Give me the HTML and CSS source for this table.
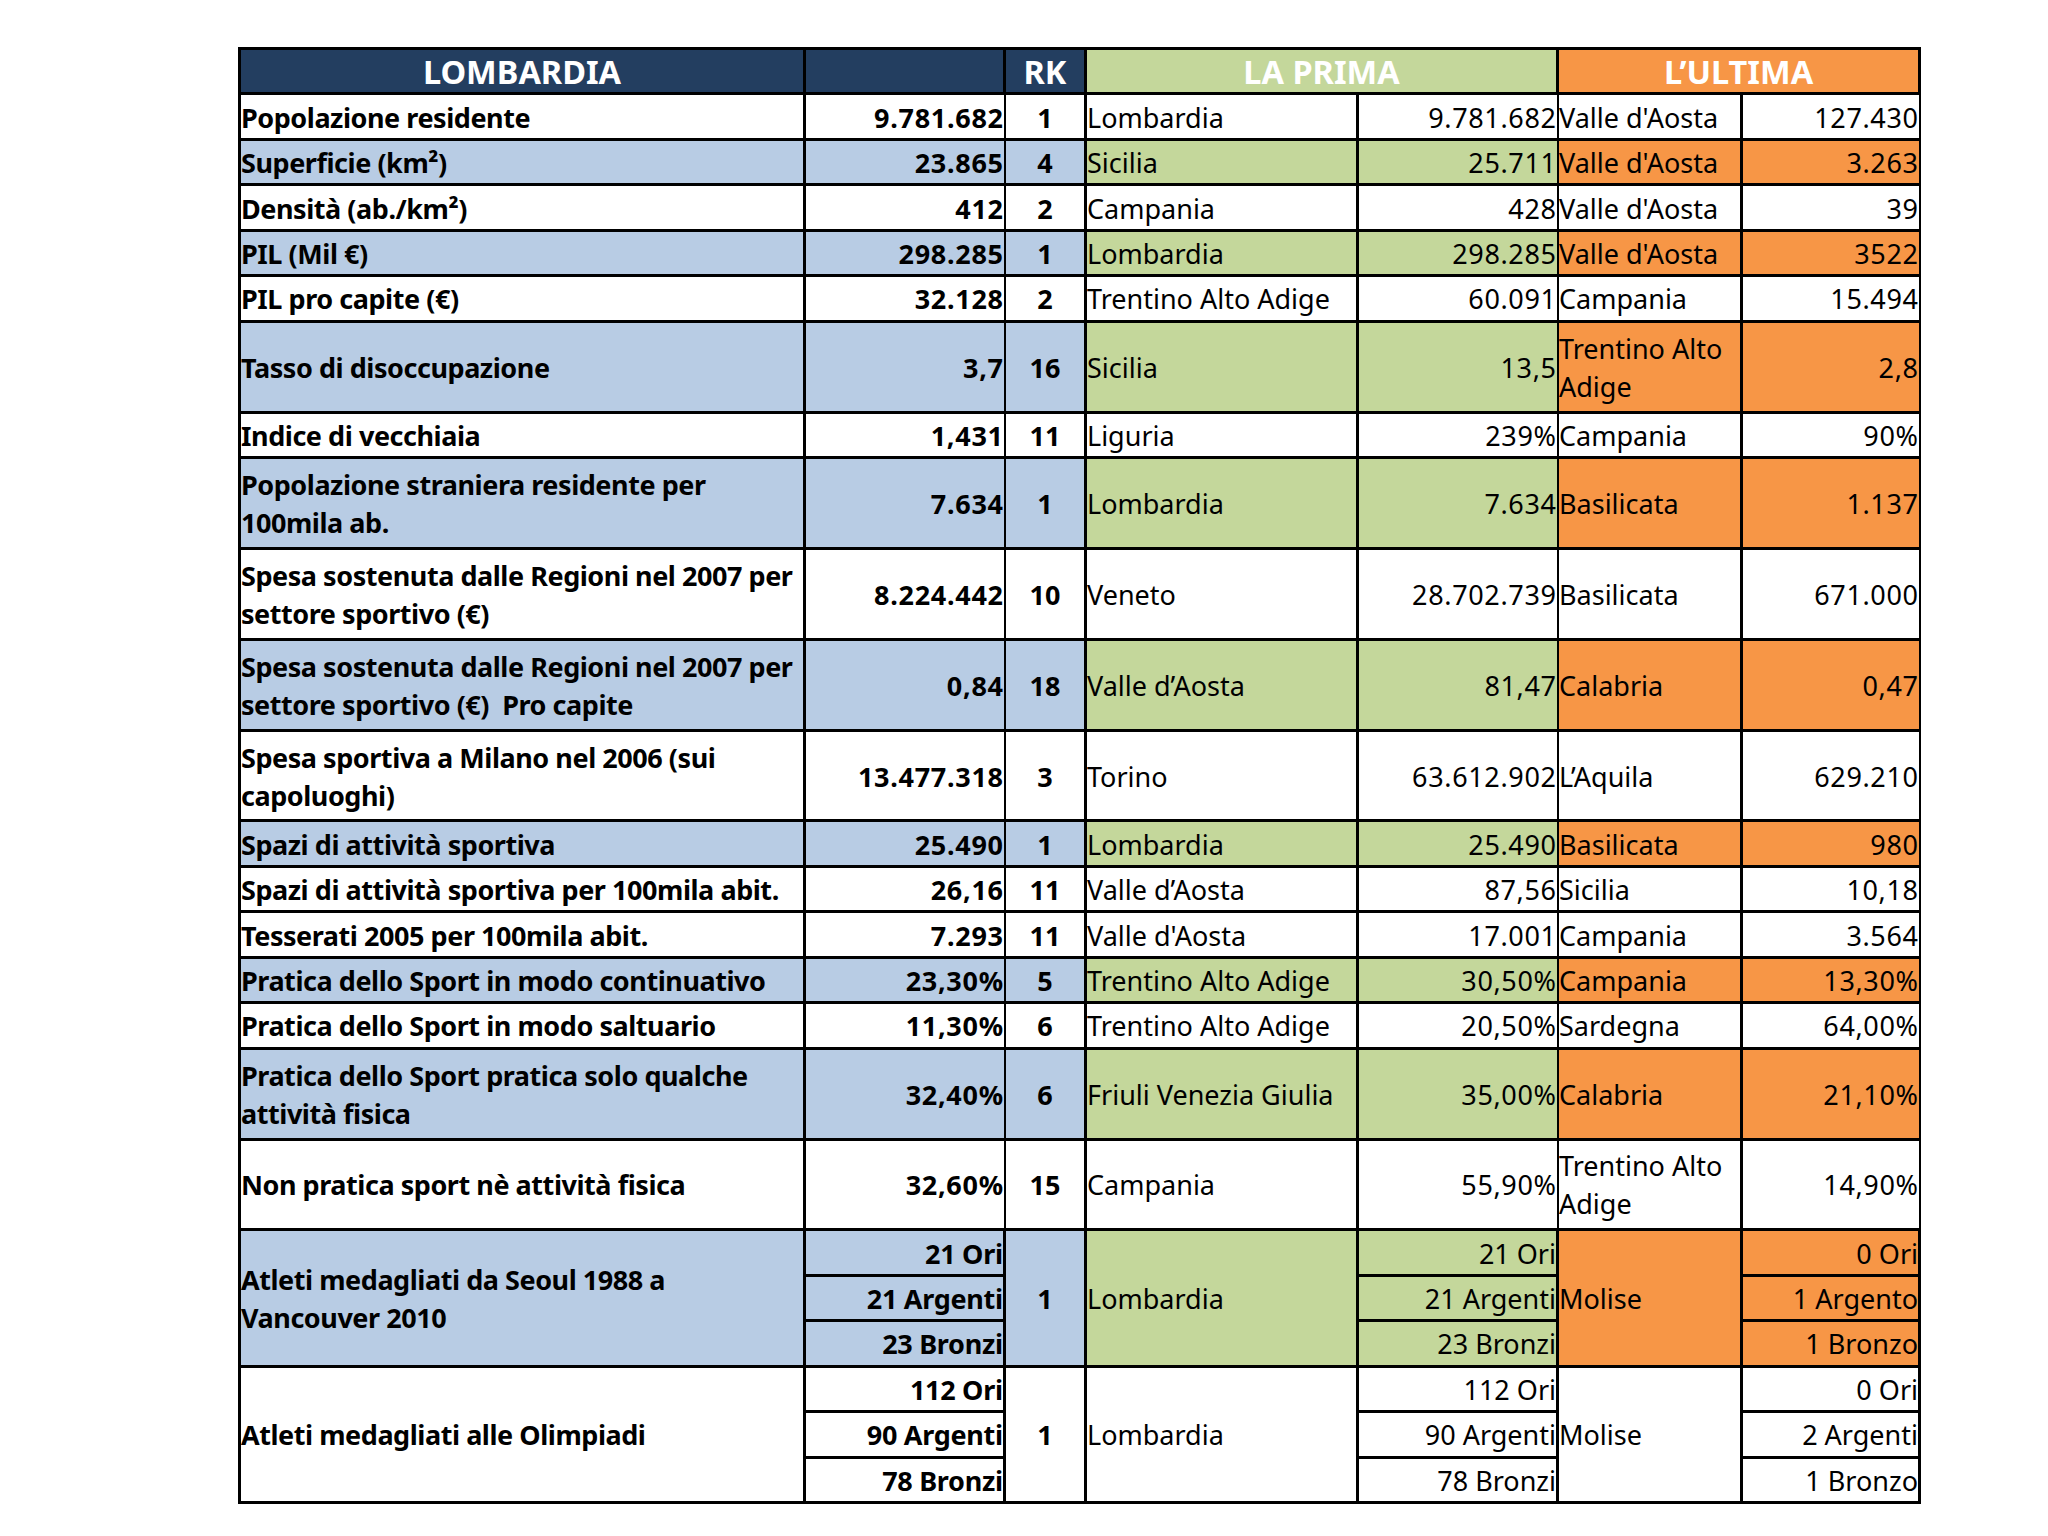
FILE: index.html
```html
<!DOCTYPE html>
<html lang="it">
<head>
<meta charset="utf-8">
<title>Lombardia</title>
<link rel="stylesheet" href="styles.css">
</head>
<body>
<div class="sheet">
  <div class="grid">
    <div class="cell hd navy">LOMBARDIA</div>
    <div class="cell hd navy"></div>
    <div class="cell hd navy">RK</div>
    <div class="cell hd hg c2">LA PRIMA</div>
    <div class="cell hd ho c2">L’ULTIMA</div>

    <div class="cell lab">Popolazione residente</div>
    <div class="cell val">9.781.682</div>
    <div class="cell rk">1</div>
    <div class="cell reg">Lombardia</div>
    <div class="cell num">9.781.682</div>
    <div class="cell reg">Valle d'Aosta</div>
    <div class="cell num">127.430</div>

    <div class="cell lab b">Superficie (km²)</div>
    <div class="cell val b">23.865</div>
    <div class="cell rk b">4</div>
    <div class="cell reg g">Sicilia</div>
    <div class="cell num g">25.711</div>
    <div class="cell reg o">Valle d'Aosta</div>
    <div class="cell num o">3.263</div>

    <div class="cell lab">Densità (ab./km²)</div>
    <div class="cell val">412</div>
    <div class="cell rk">2</div>
    <div class="cell reg">Campania</div>
    <div class="cell num">428</div>
    <div class="cell reg">Valle d'Aosta</div>
    <div class="cell num">39</div>

    <div class="cell lab b">PIL (Mil €)</div>
    <div class="cell val b">298.285</div>
    <div class="cell rk b">1</div>
    <div class="cell reg g">Lombardia</div>
    <div class="cell num g">298.285</div>
    <div class="cell reg o">Valle d'Aosta</div>
    <div class="cell num o">3522</div>

    <div class="cell lab">PIL pro capite (€)</div>
    <div class="cell val">32.128</div>
    <div class="cell rk">2</div>
    <div class="cell reg">Trentino Alto Adige</div>
    <div class="cell num">60.091</div>
    <div class="cell reg">Campania</div>
    <div class="cell num">15.494</div>

    <div class="cell lab b r2">Tasso di disoccupazione</div>
    <div class="cell val b r2">3,7</div>
    <div class="cell rk b r2">16</div>
    <div class="cell reg g r2">Sicilia</div>
    <div class="cell num g r2">13,5</div>
    <div class="cell reg o r2">Trentino Alto<br>Adige</div>
    <div class="cell num o r2">2,8</div>

    <div class="cell lab">Indice di vecchiaia</div>
    <div class="cell val">1,431</div>
    <div class="cell rk">11</div>
    <div class="cell reg">Liguria</div>
    <div class="cell num">239%</div>
    <div class="cell reg">Campania</div>
    <div class="cell num">90%</div>

    <div class="cell lab b r2">Popolazione straniera residente per<br>100mila ab.</div>
    <div class="cell val b r2">7.634</div>
    <div class="cell rk b r2">1</div>
    <div class="cell reg g r2">Lombardia</div>
    <div class="cell num g r2">7.634</div>
    <div class="cell reg o r2">Basilicata</div>
    <div class="cell num o r2">1.137</div>

    <div class="cell lab r2">Spesa sostenuta dalle Regioni nel 2007 per<br>settore sportivo (€)</div>
    <div class="cell val r2">8.224.442</div>
    <div class="cell rk r2">10</div>
    <div class="cell reg r2">Veneto</div>
    <div class="cell num r2">28.702.739</div>
    <div class="cell reg r2">Basilicata</div>
    <div class="cell num r2">671.000</div>

    <div class="cell lab b r2">Spesa sostenuta dalle Regioni nel 2007 per<br>settore sportivo (€)&nbsp; Pro capite</div>
    <div class="cell val b r2">0,84</div>
    <div class="cell rk b r2">18</div>
    <div class="cell reg g r2">Valle d’Aosta</div>
    <div class="cell num g r2">81,47</div>
    <div class="cell reg o r2">Calabria</div>
    <div class="cell num o r2">0,47</div>

    <div class="cell lab r2">Spesa sportiva a Milano nel 2006 (sui<br>capoluoghi)</div>
    <div class="cell val r2">13.477.318</div>
    <div class="cell rk r2">3</div>
    <div class="cell reg r2">Torino</div>
    <div class="cell num r2">63.612.902</div>
    <div class="cell reg r2">L’Aquila</div>
    <div class="cell num r2">629.210</div>

    <div class="cell lab b">Spazi di attività sportiva</div>
    <div class="cell val b">25.490</div>
    <div class="cell rk b">1</div>
    <div class="cell reg g">Lombardia</div>
    <div class="cell num g">25.490</div>
    <div class="cell reg o">Basilicata</div>
    <div class="cell num o">980</div>

    <div class="cell lab">Spazi di attività sportiva per 100mila abit.</div>
    <div class="cell val">26,16</div>
    <div class="cell rk">11</div>
    <div class="cell reg">Valle d’Aosta</div>
    <div class="cell num">87,56</div>
    <div class="cell reg">Sicilia</div>
    <div class="cell num">10,18</div>

    <div class="cell lab">Tesserati 2005 per 100mila abit.</div>
    <div class="cell val">7.293</div>
    <div class="cell rk">11</div>
    <div class="cell reg">Valle d'Aosta</div>
    <div class="cell num">17.001</div>
    <div class="cell reg">Campania</div>
    <div class="cell num">3.564</div>

    <div class="cell lab b">Pratica dello Sport in modo continuativo</div>
    <div class="cell val b">23,30%</div>
    <div class="cell rk b">5</div>
    <div class="cell reg g">Trentino Alto Adige</div>
    <div class="cell num g">30,50%</div>
    <div class="cell reg o">Campania</div>
    <div class="cell num o">13,30%</div>

    <div class="cell lab">Pratica dello Sport in modo saltuario</div>
    <div class="cell val">11,30%</div>
    <div class="cell rk">6</div>
    <div class="cell reg">Trentino Alto Adige</div>
    <div class="cell num">20,50%</div>
    <div class="cell reg">Sardegna</div>
    <div class="cell num">64,00%</div>

    <div class="cell lab b r2">Pratica dello Sport pratica solo qualche<br>attività fisica</div>
    <div class="cell val b r2">32,40%</div>
    <div class="cell rk b r2">6</div>
    <div class="cell reg g r2">Friuli Venezia Giulia</div>
    <div class="cell num g r2">35,00%</div>
    <div class="cell reg o r2">Calabria</div>
    <div class="cell num o r2">21,10%</div>

    <div class="cell lab r2">Non pratica sport nè attività fisica</div>
    <div class="cell val r2">32,60%</div>
    <div class="cell rk r2">15</div>
    <div class="cell reg r2">Campania</div>
    <div class="cell num r2">55,90%</div>
    <div class="cell reg r2">Trentino Alto<br>Adige</div>
    <div class="cell num r2">14,90%</div>

    <div class="cell lab b r3">Atleti medagliati da Seoul 1988 a<br>Vancouver 2010</div>
    <div class="cell val med b">21 Ori</div>
    <div class="cell rk b r3">1</div>
    <div class="cell reg g r3">Lombardia</div>
    <div class="cell num med g">21 Ori</div>
    <div class="cell reg o r3">Molise</div>
    <div class="cell num med o">0 Ori</div>
    <div class="cell val med b">21 Argenti</div>
    <div class="cell num med g">21 Argenti</div>
    <div class="cell num med o">1 Argento</div>
    <div class="cell val med b">23 Bronzi</div>
    <div class="cell num med g">23 Bronzi</div>
    <div class="cell num med o">1 Bronzo</div>

    <div class="cell lab r3">Atleti medagliati alle Olimpiadi</div>
    <div class="cell val med">112 Ori</div>
    <div class="cell rk r3">1</div>
    <div class="cell reg r3">Lombardia</div>
    <div class="cell num med">112 Ori</div>
    <div class="cell reg r3">Molise</div>
    <div class="cell num med">0 Ori</div>
    <div class="cell val med">90 Argenti</div>
    <div class="cell num med">90 Argenti</div>
    <div class="cell num med">2 Argenti</div>
    <div class="cell val med">78 Bronzi</div>
    <div class="cell num med">78 Bronzi</div>
    <div class="cell num med">1 Bronzo</div>
  </div>
</div>
</body>
</html>
```
FILE: styles.css
```css
html, body {
  margin: 0;
  background: #ffffff;
}

body {
  font-family: "Noto Sans", "DejaVu Sans", sans-serif;
  color: #000000;
}

.sheet {
  padding: 47px 0 30px 238px;
}

.grid {
  display: grid;
  width: max-content;
  grid-template-columns: 562px 197px 78px 269px 197px 181px 175px;
  grid-template-rows: repeat(32, 42.45px);
  gap: 3px;
  padding: 3px;
  background: #000000;
}

.cell {
  display: flex;
  align-items: center;
  background: #ffffff;
  font-size: 27px;
  line-height: 38px;
  white-space: nowrap;
  padding: 2px 0 0 0;
}

.r2 { grid-row: span 2; }
.r3 { grid-row: span 3; }
.c2 { grid-column: span 2; }

.hd {
  justify-content: center;
  color: #ffffff;
  font-weight: 700;
  font-size: 32.5px;
  padding-top: 1px;
}

.navy { background: #233e60; }
.hg { background: #c4d79b; }
.ho { background: #f79646; }

.b { background: #b8cce4; }
.g { background: #c4d79b; }
.o { background: #f79646; }

.lab {
  font-weight: 700;
  justify-content: flex-start;
  letter-spacing: -0.45px;
}

.val {
  font-weight: 700;
  justify-content: flex-end;
  text-align: right;
  letter-spacing: 0.7px;
  margin-right: -0.7px;
}

.rk {
  font-weight: 700;
  justify-content: center;
}

.reg {
  justify-content: flex-start;
}

.num {
  justify-content: flex-end;
  text-align: right;
  letter-spacing: 0.65px;
  margin-right: -0.65px;
}

.val.med {
  letter-spacing: -0.3px;
  margin-right: 0.3px;
}

.num.med {
  letter-spacing: 0;
  margin-right: 0;
}
```
